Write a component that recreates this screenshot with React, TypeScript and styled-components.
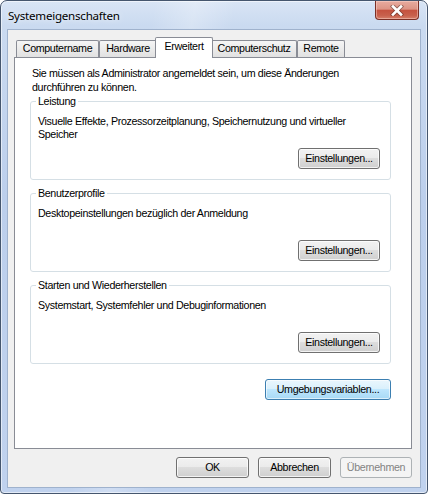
import React from 'react';
import styled, { createGlobalStyle, css } from 'styled-components';

const Global = createGlobalStyle`
  html, body { margin: 0; padding: 0; background: #ffffff; }
  body {
    font-family: "Liberation Sans", Arial, sans-serif;
    font-size: 10.7px;
    letter-spacing: -0.35px;
    color: #000;
  }
  * { box-sizing: border-box; }
`;

const Window = styled.div`
  width: 428px;
  height: 494px;
  border: 1px solid #45566e;
  border-radius: 7px 7px 4px 4px;
  background:
    linear-gradient(100deg, rgba(255,255,255,0) 30%, rgba(255,255,255,0.25) 38%, rgba(255,255,255,0) 46%),
    linear-gradient(180deg, #d9e5f5 0%, #cadaf0 5%, #bccfec 40%, #c0d2ee 100%);
  display: flex;
  flex-direction: column;
  overflow: hidden;
  box-shadow: inset 0 0 0 1px rgba(255, 255, 255, 0.55);
`;

const TitleBar = styled.div`
  height: 29px;
  flex: none;
  display: flex;
  justify-content: space-between;
  align-items: flex-start;
  padding: 0 8px 0 7px;
`;

const Title = styled.div`
  font-family: "Noto Sans", "Open Sans", sans-serif;
  font-size: 11.6px;
  letter-spacing: -0.25px;
  line-height: 16px;
  padding-top: 7px;
  color: #000;
  text-shadow: 0 0 6px rgba(255, 255, 255, 0.9);
`;

const CloseButton = styled.div`
  width: 44px;
  height: 19px;
  border: 1px solid #7b2f25;
  border-top: none;
  border-radius: 0 0 4px 4px;
  background: linear-gradient(180deg, #e7ab9f 0%, #dc9485 45%, #c5523f 52%, #c8604c 80%, #d67e69 100%);
  box-shadow: inset 0 0 0 1px rgba(255, 220, 210, 0.45);
  display: flex;
  align-items: center;
  justify-content: center;
`;

const Client = styled.div`
  flex: 1;
  margin: 0 7px 6px 7px;
  background: #f0f0f0;
  box-shadow: 0 0 0 1px #9fb2cd;
  display: flex;
  flex-direction: column;
  padding: 7px 8px 9px 6px;
`;

const TabRow = styled.div`
  display: flex;
  align-items: flex-end;
  height: 20px;
  padding-left: 2px;
  position: relative;
  z-index: 1;
`;

const Tab = styled.div<{ $active?: boolean; $w: number }>`
  width: ${(p) => p.$w}px;
  height: 17px;
  border: 1px solid #898c95;
  border-bottom: none;
  border-radius: 2px 2px 0 0;
  background: linear-gradient(180deg, #f5f5f5 0%, #ebebeb 50%, #e1e1e1 100%);
  line-height: 15px;
  text-align: center;
  white-space: nowrap;
  ${(p) =>
    p.$active &&
    css`
      width: ${p.$w + 4}px;
      height: 21px;
      margin: 0 -2px -1px -2px;
      background: #ffffff;
      line-height: 16px;
      position: relative;
      z-index: 2;
    `}
`;

const Panel = styled.div`
  height: 392px;
  flex: none;
  background: #ffffff;
  border: 1px solid #898c95;
  padding: 8px 20px 0 15px;
  display: flex;
  flex-direction: column;
`;

const Intro = styled.p`
  margin: 0 0 1px 2px;
  line-height: 14px;
`;

const Group = styled.fieldset`
  margin: 0 0 7px 0;
  min-width: 0;
  border: 1px solid #d5dfe5;
  border-radius: 3px;
  padding: 0 10px 10px 7px;
  display: flex;
  flex-direction: column;
`;

const Legend = styled.legend`
  margin-left: -2px;
  padding: 0 2px;
  line-height: 13px;
`;

const Desc = styled.div`
  margin-top: 7px;
  min-height: 26px;
  line-height: 13px;
`;

const ButtonRow = styled.div<{ $top?: number }>`
  display: flex;
  justify-content: flex-end;
  gap: 9px;
  margin-top: ${(p) => p.$top ?? 7}px;
`;

type Variant = 'normal' | 'default' | 'disabled';

const Button = styled.div<{ $w: number; $variant?: Variant }>`
  width: ${(p) => p.$w}px;
  height: 21px;
  border: 1px solid #707070;
  border-radius: 3px;
  background: linear-gradient(180deg, #f2f2f2 0%, #ebebeb 49%, #dddddd 50%, #cfcfcf 100%);
  box-shadow: inset 0 0 0 1px rgba(255, 255, 255, 0.75);
  display: flex;
  align-items: center;
  justify-content: center;
  line-height: 13px;
  white-space: nowrap;
  color: #000;
  ${(p) =>
    p.$variant === 'default' &&
    css`
      border-color: #3c7fb1;
      background: linear-gradient(180deg, #eaf6fd 0%, #d9f0fc 49%, #bee6fd 50%, #a7d9f5 100%);
      box-shadow: inset 0 0 0 1px rgba(255, 255, 255, 0.6);
    `}
  ${(p) =>
    p.$variant === 'disabled' &&
    css`
      border-color: #adb2b5;
      background: #f4f4f4;
      box-shadow: none;
      color: #838383;
    `}
`;

const Footer = styled.div`
  display: flex;
  justify-content: flex-end;
  gap: 9px;
  margin-top: 8px;
`;

const CloseIcon = () => (
  <svg width="14" height="11" viewBox="0 0 14 11">
    <path
      d="M3 1.5 L11 9.5 M11 1.5 L3 9.5"
      stroke="#4a2620"
      strokeWidth="4.4"
      strokeLinecap="square"
      fill="none"
      opacity="0.5"
    />
    <path d="M3 1.5 L11 9.5 M11 1.5 L3 9.5" stroke="#ffffff" strokeWidth="2.6" strokeLinecap="square" fill="none" />
  </svg>
);

const groups = [
  {
    title: 'Leistung',
    text: 'Visuelle Effekte, Prozessorzeitplanung, Speichernutzung und virtueller Speicher',
  },
  { title: 'Benutzerprofile', text: 'Desktopeinstellungen bezüglich der Anmeldung' },
  { title: 'Starten und Wiederherstellen', text: 'Systemstart, Systemfehler und Debuginformationen' },
];

const tabs = [
  { label: 'Computername', w: 83 },
  { label: 'Hardware', w: 58 },
  { label: 'Erweitert', w: 54, active: true },
  { label: 'Computerschutz', w: 86 },
  { label: 'Remote', w: 48 },
];

export default function App() {
  return (
    <>
      <Global />
      <Window>
        <TitleBar>
          <Title>Systemeigenschaften</Title>
          <CloseButton>
            <CloseIcon />
          </CloseButton>
        </TitleBar>
        <Client>
          <TabRow>
            {tabs.map((t) => (
              <Tab key={t.label} $w={t.w} $active={t.active}>
                {t.label}
              </Tab>
            ))}
          </TabRow>
          <Panel>
            <Intro>Sie müssen als Administrator angemeldet sein, um diese Änderungen durchführen zu können.</Intro>
            {groups.map((g) => (
              <Group key={g.title}>
                <Legend>{g.title}</Legend>
                <Desc>{g.text}</Desc>
                <ButtonRow>
                  <Button $w={82}>Einstellungen...</Button>
                </ButtonRow>
              </Group>
            ))}
            <ButtonRow $top={8}>
              <Button $w={126} $variant="default">
                Umgebungsvariablen...
              </Button>
            </ButtonRow>
          </Panel>
          <Footer>
            <Button $w={73}>OK</Button>
            <Button $w={73}>Abbrechen</Button>
            <Button $w={72} $variant="disabled">
              Übernehmen
            </Button>
          </Footer>
        </Client>
      </Window>
    </>
  );
}
